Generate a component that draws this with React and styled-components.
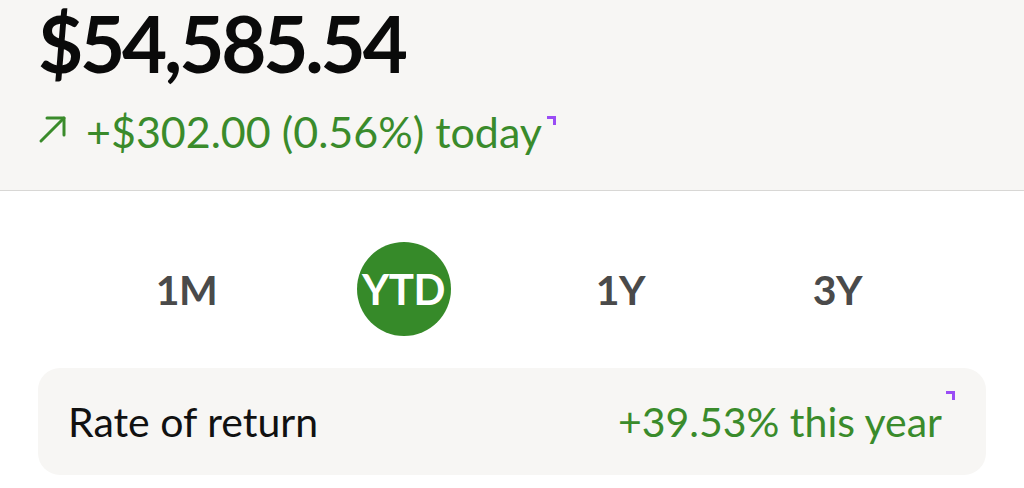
import React from "react";
import styled, { createGlobalStyle } from "styled-components";

const Global = createGlobalStyle`
  html, body { margin: 0; padding: 0; background: #ffffff; }
  body { font-family: Lato, "Open Sans", sans-serif; -webkit-font-smoothing: antialiased; }
`;

const Page = styled.div`
  width: 1024px;
  height: 488px;
  overflow: hidden;
  background: #ffffff;
`;

const Header = styled.header`
  background: #f7f6f4;
  border-bottom: 1px solid #d8d7d5;
  height: 191px;
  padding: 0 38px;
  box-sizing: border-box;
  display: flex;
  flex-direction: column;
`;

const Balance = styled.div`
  font-size: 78px;
  font-weight: 700;
  color: #0a0a0a;
  line-height: 1.1;
  margin-top: 1px;
  letter-spacing: -3.2px;
`;

const Change = styled.div`
  display: flex;
  align-items: center;
  gap: 18px;
  margin-top: 18px;
  color: #3a8b2b;
  font-size: 43px;
  line-height: 1;
`;

const Marker = styled.span`
  position: relative;
  display: inline-block;
  width: 14px;
  height: 1em;
  &::after {
    content: "";
    position: absolute;
    left: ${(p) => p.$left}px;
    top: ${(p) => p.$top}px;
    width: 9px;
    height: 9px;
    border-top: 3px solid #9a4cf5;
    border-right: 3px solid #9a4cf5;
    box-sizing: border-box;
  }
`;

const Tabs = styled.nav`
  display: grid;
  grid-template-columns: repeat(4, 1fr);
  padding: 0 78px;
  margin-top: 51px;
  height: 94px;
`;

const Tab = styled.div`
  display: flex;
  align-items: center;
  justify-content: center;
  font-size: ${(p) => (p.$active ? 42 : 41)}px;
  font-weight: 700;
  color: ${(p) => (p.$active ? "#ffffff" : "#4a4a4a")};
  & > span {
    width: 94px;
    height: 94px;
    border-radius: 50%;
    display: flex;
    align-items: center;
    justify-content: center;
    background: ${(p) => (p.$active ? "#368a29" : "transparent")};
    letter-spacing: -0.5px;
  }
`;

const Card = styled.section`
  margin: 32px 38px 0;
  height: 107px;
  border-radius: 22px;
  background: #f7f6f4;
  display: flex;
  align-items: center;
  justify-content: space-between;
  padding: 0 30px;
  box-sizing: border-box;
  font-size: 41px;
`;

const Label = styled.span`
  color: #111111;
`;

const Value = styled.span`
  color: #3a8b2b;
  display: flex;
  align-items: center;
`;

const Arrow = () => (
  <svg width="30" height="30" viewBox="0 0 30 30" fill="none" stroke="#3a8b2b" strokeWidth="3" strokeLinecap="round" strokeLinejoin="round">
    <path d="M3 27 L26 4" />
    <path d="M9 4 H26 V21" />
  </svg>
);

export default function App() {
  return (
    <Page>
      <Global />
      <Header>
        <Balance>$54,585.54</Balance>
        <Change>
          <Arrow />
          <span>
            +$302.00 (0.56%) today
            <Marker $left={5} $top={11} />
          </span>
        </Change>
      </Header>
      <Tabs>
        {["1M", "YTD", "1Y", "3Y"].map((t) => (
          <Tab key={t} $active={t === "YTD"}>
            <span>{t}</span>
          </Tab>
        ))}
      </Tabs>
      <Card>
        <Label>Rate of return</Label>
        <Value>
          +39.53% this year
          <Marker $left={4} $top={-10} />
        </Value>
      </Card>
    </Page>
  );
}
